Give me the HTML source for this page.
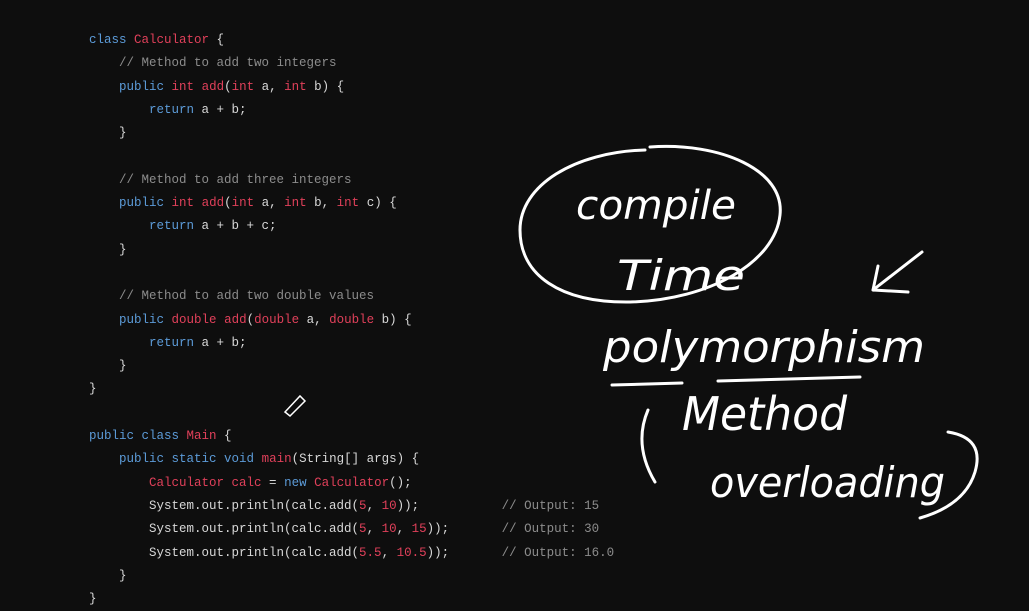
<!DOCTYPE html>
<html><head><meta charset="utf-8"><style>
html,body{margin:0;padding:0;background:#0e0e0e;width:1029px;height:600px;overflow:hidden}
pre{position:absolute;left:89px;top:29px;margin:0;font-family:"Liberation Mono",monospace;font-size:12.5px;line-height:23.3px;color:#d8d8d8}
.k{color:#5c9bd8}.r{color:#e0405a}.c{color:#8c8c8c}
svg{position:absolute;left:0;top:0}
</style></head><body>
<pre><span class="k">class</span> <span class="r">Calculator</span> {
    <span class="c">// Method to add two integers</span>
    <span class="k">public</span> <span class="r">int</span> <span class="r">add</span>(<span class="r">int</span> a, <span class="r">int</span> b) {
        <span class="k">return</span> a + b;
    }

    <span class="c">// Method to add three integers</span>
    <span class="k">public</span> <span class="r">int</span> <span class="r">add</span>(<span class="r">int</span> a, <span class="r">int</span> b, <span class="r">int</span> c) {
        <span class="k">return</span> a + b + c;
    }

    <span class="c">// Method to add two double values</span>
    <span class="k">public</span> <span class="r">double</span> <span class="r">add</span>(<span class="r">double</span> a, <span class="r">double</span> b) {
        <span class="k">return</span> a + b;
    }
}

<span class="k">public class</span> <span class="r">Main</span> {
    <span class="k">public static void</span> <span class="r">main</span>(String[] args) {
        <span class="r">Calculator calc</span> = <span class="k">new</span> <span class="r">Calculator</span>();
        System.out.println(calc.add(<span class="r">5</span>, <span class="r">10</span>));           <span class="c">// Output: 15</span>
        System.out.println(calc.add(<span class="r">5</span>, <span class="r">10</span>, <span class="r">15</span>));       <span class="c">// Output: 30</span>
        System.out.println(calc.add(<span class="r">5.5</span>, <span class="r">10.5</span>));       <span class="c">// Output: 16.0</span>
    }
}</pre>
<svg width="1029" height="600" viewBox="0 0 1029 600" fill="none" stroke="#fff" stroke-width="3" stroke-linecap="round">
<path d="M650 147 C720 142 785 170 780 215 C775 262 710 300 630 302 C560 303 520 275 520 230 C520 185 575 152 645 150"/>
<path d="M922 252 L873 290 M873 290 L908 292 M873 290 L878 266"/>
<path d="M612 385 L682 383 M718 381 L860 377"/>
<path d="M648 410 Q633 445 655 482"/>
<path d="M948 432 Q985 438 975 472 Q965 505 920 518"/>
<path d="M285 412 L300 396 L305 401 L290 416 Z" stroke-width="1.5"/>
<g fill="#fff" stroke="none" font-family="DejaVu Sans, sans-serif" font-style="italic">
<text x="576" y="219" font-size="40" textLength="160" lengthAdjust="spacingAndGlyphs">compile</text>
<text x="617" y="290" font-size="42" textLength="128" lengthAdjust="spacingAndGlyphs">Time</text>
<text x="603" y="362" font-size="44" textLength="322" lengthAdjust="spacingAndGlyphs">polymorphism</text>
<text x="682" y="430" font-size="46" textLength="165" lengthAdjust="spacingAndGlyphs">Method</text>
<text x="710" y="497" font-size="42" textLength="235" lengthAdjust="spacingAndGlyphs">overloading</text>
</g>
</svg>
</body></html>
